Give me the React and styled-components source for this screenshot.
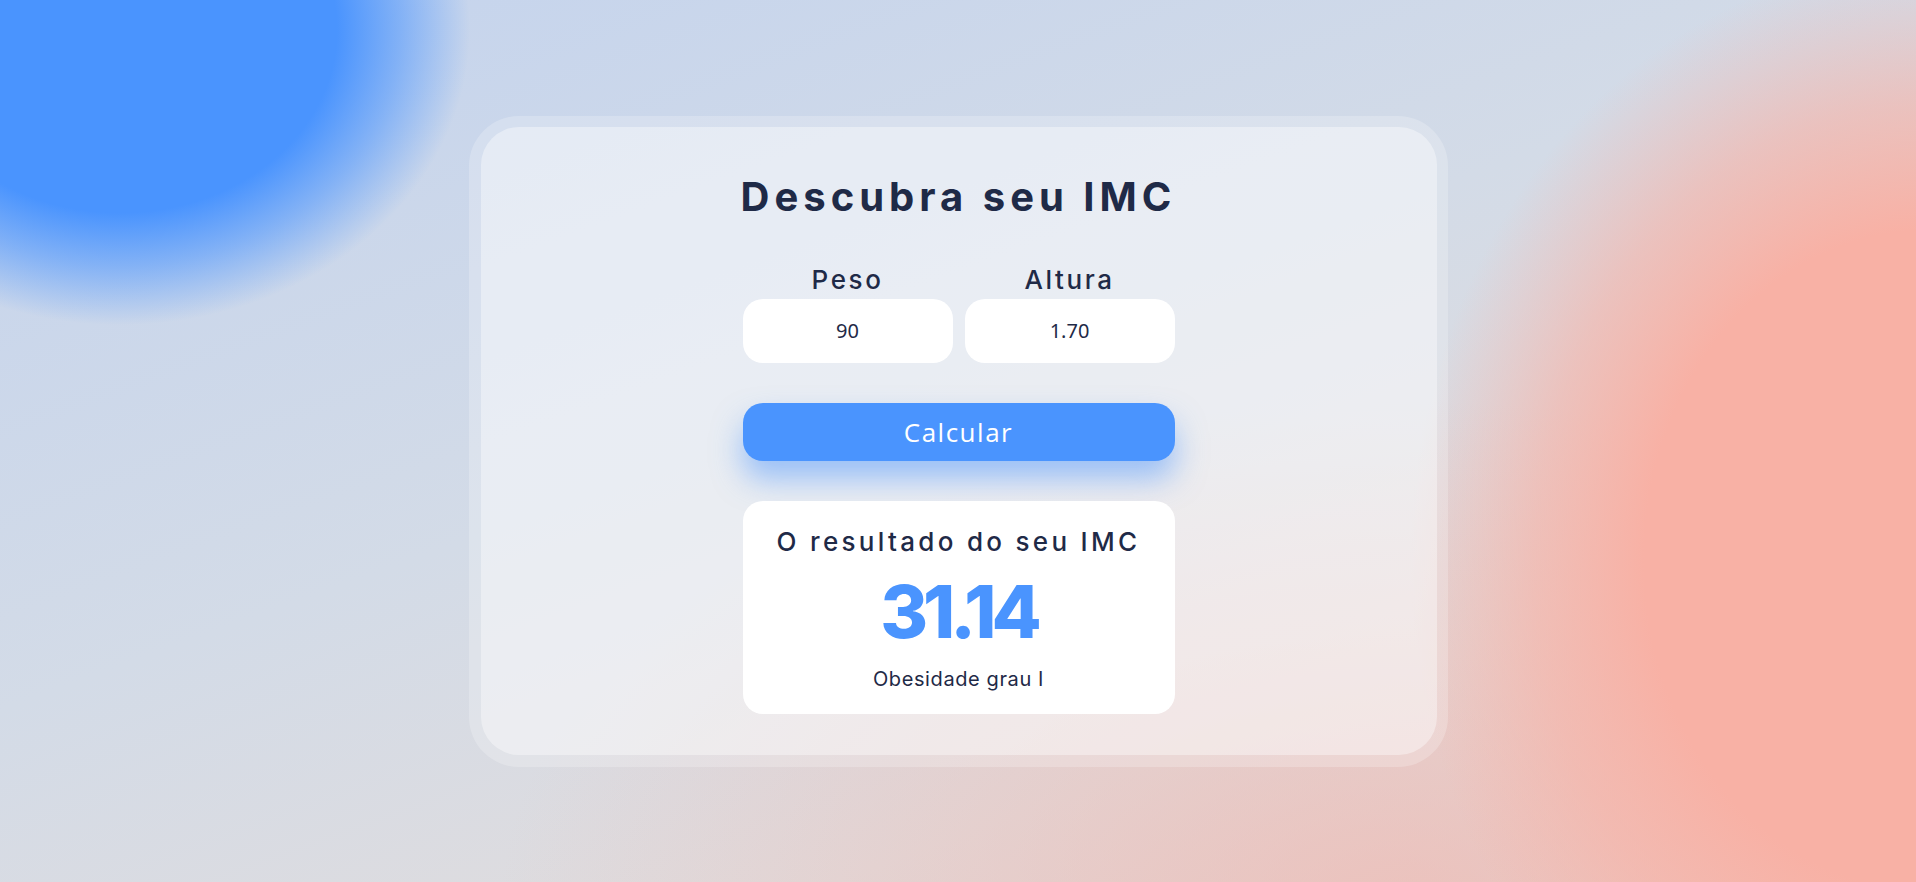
import React, { useState } from 'react'
import styled, { createGlobalStyle } from 'styled-components'

const GlobalStyle = createGlobalStyle`
  * {
    box-sizing: border-box;
  }

  html, body {
    margin: 0;
    padding: 0;
    height: 100%;
  }

  body {
    font-family: 'Inter', 'Noto Sans', sans-serif;
    color: #1f2a47;
    overflow: hidden;
  }
`

const classify = (imc) => {
  if (imc < 18.5) return 'Abaixo do peso'
  if (imc < 25) return 'Peso normal'
  if (imc < 30) return 'Sobrepeso'
  if (imc < 35) return 'Obesidade grau I'
  if (imc < 40) return 'Obesidade grau II'
  return 'Obesidade grau III'
}

const App = () => {
  const [peso, setPeso] = useState('90')
  const [altura, setAltura] = useState('1.70')
  const [result, setResult] = useState({ value: '31.14', label: 'Obesidade grau I' })

  const calcular = () => {
    const p = parseFloat(peso)
    const a = parseFloat(altura)
    if (!p || !a) return
    const imc = p / (a * a)
    setResult({ value: imc.toFixed(2), label: classify(imc) })
  }

  return (
    <Page>
      <GlobalStyle />
      <Frame>
        <Panel>
          <Title>Descubra seu IMC</Title>

          <Fields>
            <Field>
              <Label htmlFor="peso">Peso</Label>
              <Input id="peso" value={peso} onChange={(e) => setPeso(e.target.value)} />
            </Field>
            <Field>
              <Label htmlFor="altura">Altura</Label>
              <Input id="altura" value={altura} onChange={(e) => setAltura(e.target.value)} />
            </Field>
          </Fields>

          <CalcButton onClick={calcular}>Calcular</CalcButton>

          <ResultBox>
            <ResultTitle>O resultado do seu IMC</ResultTitle>
            <ResultValue>{result.value}</ResultValue>
            <ResultLabel>{result.label}</ResultLabel>
          </ResultBox>
        </Panel>
      </Frame>
    </Page>
  )
}

export default App

const Page = styled.main`
  width: 100vw;
  height: 100vh;
  display: flex;
  align-items: center;
  justify-content: center;
  background:
    radial-gradient(ellipse 350px 295px at 120px 30px, #4a94fe 0%, #4a94fe 62%, rgba(74, 148, 254, 0.55) 80%, rgba(74, 148, 254, 0) 100%),
    radial-gradient(ellipse 520px 600px at 1930px 560px, #f8b1a5 0%, #f8b1a5 55%, rgba(248, 177, 165, 0.6) 76%, rgba(248, 177, 165, 0) 100%),
    radial-gradient(ellipse 900px 500px at 1400px 900px, rgba(240, 180, 172, 0.6) 0%, rgba(240, 180, 172, 0) 100%),
    linear-gradient(160deg, #c3d3ee 0%, #d3dbe7 45%, #e0dcdd 75%, #e8d3d0 100%);
`

const Frame = styled.section`
  width: 979px;
  height: 651px;
  padding: 11px 11px 12px 12px;
  border-radius: 50px;
  background: rgba(255, 255, 255, 0.22);
`

const Panel = styled.div`
  height: 100%;
  border-radius: 38px;
  background: rgba(255, 255, 255, 0.38);
  display: flex;
  flex-direction: column;
  align-items: center;
  padding-top: 46px;
`

const Title = styled.h1`
  margin: 0;
  font-size: 40px;
  line-height: 48px;
  font-weight: 700;
  letter-spacing: 5px;
  color: #1f2a47;
`

const Fields = styled.div`
  display: flex;
  gap: 12px;
  margin-top: 43px;
`

const Field = styled.div`
  display: flex;
  flex-direction: column;
  align-items: center;
  gap: 3px;
`

const Label = styled.label`
  font-size: 26px;
  line-height: 32px;
  font-weight: 500;
  letter-spacing: 2.6px;
  color: #1f2a47;
`

const Input = styled.input`
  width: 210px;
  height: 64px;
  border: none;
  outline: none;
  border-radius: 20px;
  background: #ffffff;
  text-align: center;
  font-family: 'Noto Sans', sans-serif;
  font-size: 20px;
  color: #1f2a47;
`

const CalcButton = styled.button`
  width: 432px;
  height: 58px;
  margin-top: 40px;
  border: none;
  border-radius: 20px;
  background: #4a94fe;
  color: #ffffff;
  font-family: 'Open Sans', sans-serif;
  font-size: 26px;
  letter-spacing: 1.5px;
  cursor: pointer;
  box-shadow: 0 18px 30px rgba(74, 148, 254, 0.5);
`

const ResultBox = styled.div`
  width: 432px;
  height: 213px;
  margin-top: 40px;
  border-radius: 20px;
  background: #ffffff;
  display: flex;
  flex-direction: column;
  align-items: center;
  padding-top: 25px;
`

const ResultTitle = styled.h2`
  margin: 0;
  font-size: 26px;
  line-height: 32px;
  font-weight: 500;
  letter-spacing: 3.3px;
  color: #1f2a47;
`

const ResultValue = styled.div`
  margin-top: 17px;
  font-size: 73px;
  line-height: 73px;
  font-weight: 800;
  letter-spacing: -5px;
  color: #4a94fe;
`

const ResultLabel = styled.p`
  margin: 19px 0 0;
  font-size: 20px;
  line-height: 24px;
  letter-spacing: 0.6px;
  color: #1f2a47;
`
